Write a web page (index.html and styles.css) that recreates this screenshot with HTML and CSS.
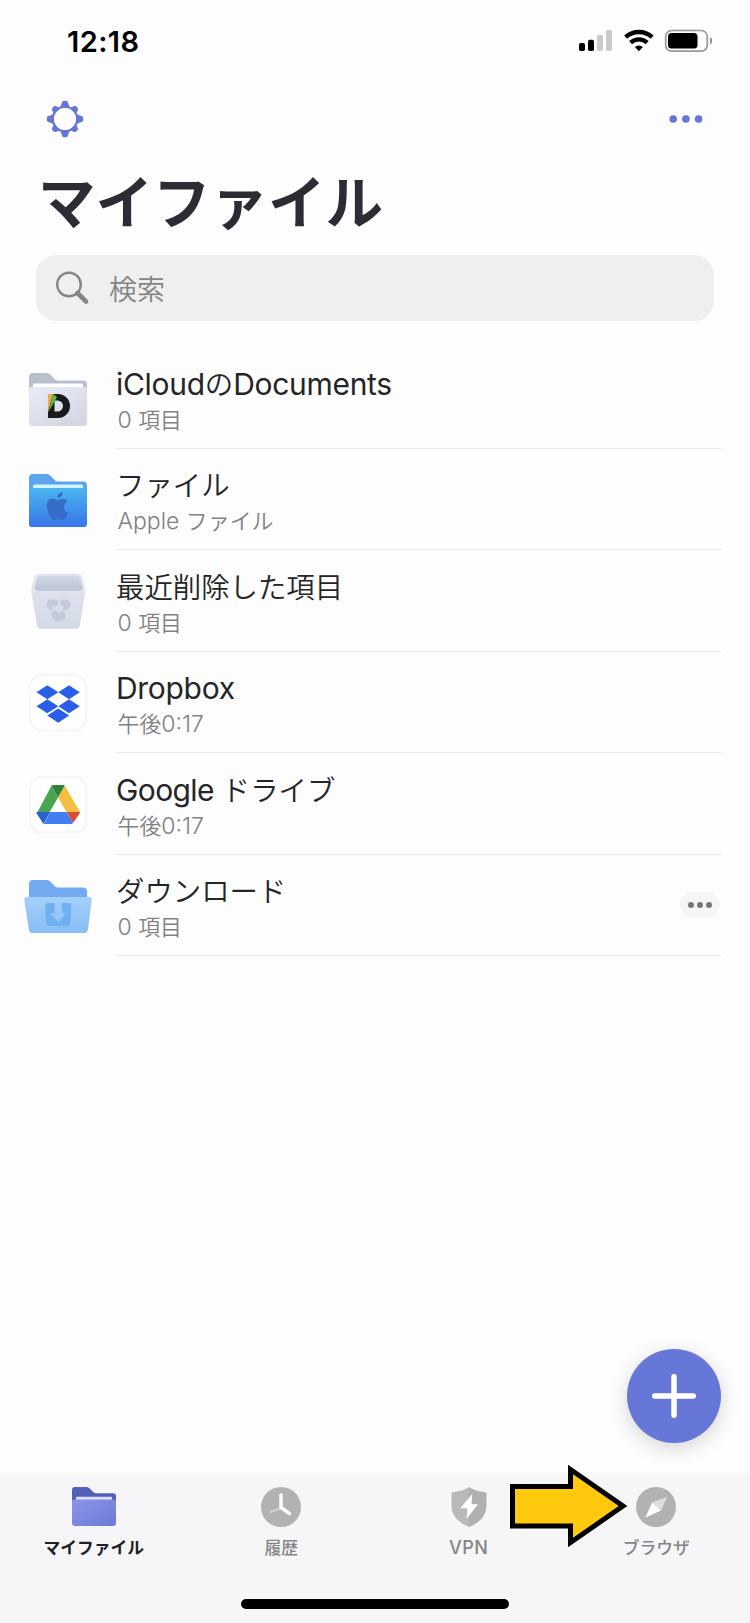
FILE: index.html
```html
<!DOCTYPE html>
<html lang="ja">
<head>
<meta charset="utf-8">
<title>マイファイル</title>
<link rel="stylesheet" href="styles.css">
</head>
<body>
<div class="screen">
  <header class="status">
    <span class="time">12:18</span>
    <svg class="status-icons" viewBox="0 0 136 26" width="136" height="26">
      <rect x="1" y="15" width="6" height="8" rx="1.8"/>
      <rect x="10" y="11.800" width="6" height="11.200" rx="1.800"/>
      <g fill="#cbcbcb"><rect x="19" y="7" width="6" height="16" rx="1.800"/><rect x="28" y="2" width="6" height="21" rx="1.800"/></g>
      <g fill="none" stroke="#000" stroke-width="4.300"><path d="M47.600 9.200a19.600 19.600 0 0 1 26.600 0"/><path d="M52.600 14.700a12.200 12.200 0 0 1 16.600 0"/></g>
      <path d="M56.900 19a5.800 5.800 0 0 1 8 0l-4 4.300z"/>
      <rect x="87.700" y="2.500" width="41.600" height="20.600" rx="6" fill="none" stroke="#999" stroke-width="1.700"/>
      <rect x="90" y="5" width="29.500" height="15.500" rx="3.500"/>
      <path d="M132.200 9c2.500 1 2.500 6.500 0 7.500z" fill="#888"/>
    </svg>
  </header>

  <nav class="toolbar">
    <svg viewBox="-19 -19 38 38" width="38" height="38" fill="#6576d6">
      <defs><path id="tooth" d="M-5-12C-3.300-13.500-3.300-18.200-1.200-18.200H1.200C3.300-18.200 3.300-13.500 5-12z"/></defs>
      <circle r="12" fill="none" stroke="#6576d6" stroke-width="2.200"/>
      <use href="#tooth"/><use href="#tooth" transform="rotate(45) translate(0 1.500)"/><use href="#tooth" transform="rotate(90)"/><use href="#tooth" transform="rotate(135) translate(0 1.500)"/><use href="#tooth" transform="rotate(180)"/><use href="#tooth" transform="rotate(225) translate(0 1.500)"/><use href="#tooth" transform="rotate(270)"/><use href="#tooth" transform="rotate(315) translate(0 1.500)"/>
      <circle r="11" fill="#fdfdfd"/>
    </svg>
    <svg viewBox="0 0 34 10" width="34" height="10" fill="#6576d6"><circle cx="4.200" cy="5" r="3.800"/><circle cx="16.900" cy="5" r="3.800"/><circle cx="29.600" cy="5" r="3.800"/></svg>
  </nav>

  <h1 class="heading">マイファイル</h1>

  <div class="search">
    <svg viewBox="0 0 36 36" width="36" height="36" fill="none" stroke="#858585"><circle cx="14" cy="14.500" r="11.800" stroke-width="2.400"/><path d="M22.500 23l8.500 8.500" stroke-width="4.600" stroke-linecap="round"/></svg>
    <span>検索</span>
  </div>

  <main class="list">
    <div class="row">
      <svg class="icon" viewBox="0 0 70 70">
        <defs><linearGradient id="gray" x2=".6" y2="1"><stop stop-color="#e9ebf5"/><stop offset="1" stop-color="#d5d8e4"/></linearGradient></defs>
        <path d="M6 47V12q0-4 4-4h14q2 0 3.500 1.800L32 14.500q1 1 3 1h25q4 0 4 4V50H6z" fill="#b9bfcc"/>
        <rect x="10" y="18.500" width="50" height="12" rx="1.500" fill="#fff"/>
        <path d="M6 24q0-2 2-2h54q2 0 2 2v34q0 3-3 3H9q-3 0-3-3z" fill="url(#gray)"/>
        <path fill-rule="evenodd" d="M27 29h8a12 12 0 0 1 0 24H25V42zm4.500 6.500v11h3a5.500 5.500 0 0 0 0-11z" fill="#181a1c"/>
        <path d="M25 29h5l-5 18z" fill="#f3a64c"/><path d="M30 29l4 3-8.500 15z" fill="#59b947"/>
      </svg>
      <div class="info"><div class="name n1">iCloud<b>の</b>Documents</div><div class="sub">0 <b>項目</b></div></div>
    </div>
    <div class="row">
      <svg class="icon" viewBox="0 0 70 70">
        <defs><linearGradient id="blue" x2="0" y2="1"><stop stop-color="#4bb5ef"/><stop offset="1" stop-color="#3875e8"/></linearGradient></defs>
        <path d="M6 47V12q0-4 4-4h14q2 0 3.500 1.800L32 14.500q1 1 3 1h25q4 0 4 4V50H6z" fill="#5aa5ec"/>
        <rect x="10" y="18.500" width="50" height="12" rx="1.500" fill="#d4f2ff"/>
        <path d="M6 24q0-2 2-2h54q2 0 2 2v34q0 3-3 3H9q-3 0-3-3z" fill="url(#blue)"/>
        <path transform="translate(0 1)" d="M34.500 33q-3-1.500-5-1.500c-4 0-6 3.500-5.500 8.500.6 6 4 13 7.500 13 1.500 0 2.200-1 4-1s2.500 1 4 1c2.500 0 4.700-4 5.500-7-5.500-2.500-5-9.500-.5-11.500-2-3-5-3.200-7-2.300q-2 .8-3 .8zM34.200 31c0-3.200 2.500-5.500 5.500-6 .3 3-2.200 6-5.500 6z" fill="#356dcb"/>
      </svg>
      <div class="info"><div class="name"><b>ファイル</b></div><div class="sub">Apple <b>ファイル</b></div></div>
    </div>
    <div class="row">
      <svg class="icon" viewBox="0 0 70 70">
        <defs><linearGradient id="bin" x2="0" y2="1"><stop stop-color="#e2e6f0"/><stop offset="1" stop-color="#d3d9e6"/></linearGradient><linearGradient id="rim" x2="0" y2="1"><stop stop-color="#d2d8e4"/><stop offset="1" stop-color="#bac2d3"/></linearGradient></defs>
        <path d="M16 5.800h39q3 0 4 3l3 12q.3 2 0 4l-5 32q-.5 4-4 4H18q-3.500 0-4-4L8.500 25q-.5-3 0-5l3.200-11.200q1-3 4.300-3z" fill="url(#bin)"/>
        <path d="M18 7.800h34q4 0 5 3l2.500 8q.5 4-4 4h-40q-4.500 0-3.500-4l2.500-8q.7-3 3.500-3z" fill="url(#rim)"/>
        <g fill="#c3cada"><path d="M25.500 31.500h8l2 3.500-2.500 4-3-1-1.500 4-3-1-2.500-4z"/><path d="M37.500 31.500h7.500l3 5-3.500 5.500h-5.500l2-3-4-3z"/><path d="M29 43.500l2.500-1.500 4 3.500 4-2.500 2 1.500 1.500 2.500-4 6h-7l-4-6z"/></g>
      </svg>
      <div class="info"><div class="name"><b>最近削除した項目</b></div><div class="sub">0 <b>項目</b></div></div>
    </div>
    <div class="row">
      <svg class="icon" viewBox="0 0 70 70">
        <rect x="7" y="6" width="56" height="55.500" rx="12" fill="#fff" stroke="#f7f7fa" stroke-width="2.500"/>
        <path fill="#295fe8" d="M24.300 16.300l11 7-11 7-10.800-7zM46 16.300l10.800 7-10.800 7-10.700-7zM24.300 30.300l11 7-11 7-10.800-7zM46 30.300l10.800 7-10.800 7-10.700-7zM35.200 39.500l11 7-11 7.300-11-7.300z"/>
      </svg>
      <div class="info"><div class="name n4">Dropbox</div><div class="sub"><b>午後</b>0:17</div></div>
    </div>
    <div class="row">
      <svg class="icon" viewBox="0 0 70 70">
        <rect x="7" y="6" width="56" height="55.500" rx="12" fill="#fff" stroke="#f7f7fa" stroke-width="2.500"/>
        <path d="M28.500 14.800L35 26.500 21.200 50.500 14 42z" fill="#49a551"/><path d="M28.500 14.800q1-.8 2-.8h9.400q1.100 0 2 .8L35 26.500z" fill="#31833b"/>
        <path d="M41.900 14.800L57 41H43.500L35 26.500z" fill="#f3be42"/><path d="M43.500 41h13.300q.2 1-.5 2L50 52z" fill="#dc4b36"/><path d="M27 41h16.500L50 52q-.5 1-2 1H21z" fill="#417ef1"/><path d="M13.500 41H27l-6.500 12L14 43q-.7-1-.5-2z" fill="#2862cb"/>
      </svg>
      <div class="info"><div class="name n5">Google <b>ドライブ</b></div><div class="sub"><b>午後</b>0:17</div></div>
    </div>
    <div class="row">
      <svg class="icon" viewBox="0 0 70 70">
        <defs><linearGradient id="sky" x2="0" y2="1"><stop stop-color="#a5cffb"/><stop offset="1" stop-color="#87bdf3"/></linearGradient></defs>
        <path d="M6 47V12q0-4 4-4h14q2 0 3.500 1.800L32 14.500q1 1 3 1h25q4 0 4 4V50H6z" fill="#74abf0"/>
        <path d="M4 25h62q3 0 2.700 3L65 57q-.5 4-3.500 4H9q-2.700 0-3.200-4L1.300 28Q1 25 4 25z" fill="url(#sky)"/>
        <path d="M25 31h6.500v10H27l8.300 9.500L43 41h-4V31h6.500q3 0 2.800 3l-1 17q-.3 3-3 3H26q-2.800 0-3-3l-1-17q-.2-3 3-3z" fill="#6fb0f0"/>
      </svg>
      <div class="info"><div class="name"><b>ダウンロード</b></div><div class="sub">0 <b>項目</b></div></div>
      <span class="more"><i></i><i></i><i></i></span>
    </div>
  </main>

  <nav class="tabs">
    <div class="tab active">
      <svg viewBox="0 0 44 40" width="44" height="40">
        <defs><linearGradient id="vio" x2="1" y2="1"><stop stop-color="#8c94e8"/><stop offset="1" stop-color="#6d7ad4"/></linearGradient></defs>
        <path d="M0 30V3q0-3 3-3h11q2 0 3.500 1.300l4 4q1 .9 3 .9H41q3 0 3 3V30z" fill="#5260b8"/>
        <rect x="4" y="9.800" width="36" height="9" rx="1" fill="#dce0ff"/>
        <path d="M0 14.500q0-2 2-2h40q2 0 2 2V36q0 3-3 3H3q-3 0-3-3z" fill="url(#vio)"/>
      </svg>
      <span>マイファイル</span>
    </div>
    <div class="tab">
      <svg viewBox="0 0 40 40" width="40" height="40" fill="none" stroke-linecap="round"><circle cx="20" cy="20" r="20" fill="#b2b2b2"/><path d="M20 21l-10.500 4" stroke="#d2d2d2" stroke-width="2"/><path d="M20 8v12.500l8.500 6" stroke="#fff" stroke-width="3.400" stroke-linejoin="round"/></svg>
      <span>履歴</span>
    </div>
    <div class="tab">
      <svg viewBox="0 0 40 40" width="40" height="40"><path d="M20 0q-7 4.600-15.500 5-2 .2-2 2v12Q3 33 20 40z" fill="#b9b9b9"/><path d="M20 0q7 4.600 15.500 5 2 .2 2 2v12Q37 33 20 40z" fill="#b0b0b0"/><path d="M23.300 7L11.200 21.200h7.300L17.500 32 29 17.200h-6.500z" fill="#fff"/></svg>
      <span class="latin">VPN</span>
    </div>
    <div class="tab">
      <svg viewBox="0 0 40 40" width="40" height="40"><circle cx="20" cy="20" r="20" fill="#b2b2b2"/><path d="M31 10L16 15.500 25 23.500z" fill="#dedede"/><path d="M16 15.500L9.500 30.500 25 23.500z" fill="#fff"/></svg>
      <span>ブラウザ</span>
    </div>
    <div class="home"></div>
  </nav>

  <div class="fab"><svg viewBox="0 0 44 44" width="44" height="44" stroke="#fff" stroke-width="5.500" stroke-linecap="round"><path d="M22 2.700v38.600M2.700 22h38.600"/></svg></div>
  <svg class="arrow" viewBox="0 0 120 84" width="120" height="84"><path d="M4.500 23.500H62.500V6.500L115 43 62.500 79.500V63H4.500z" fill="#ffc90e" stroke="#000" stroke-width="5"/></svg>
</div>
</body>
</html>
```

FILE: styles.css
```css
* { box-sizing: border-box; }
body { margin: 0; background: #fdfdfd; font-family: Inter, "Noto Sans CJK JP", sans-serif; }
svg { display: block; flex: none; }
.screen { position: relative; display: flex; flex-direction: column; width: 750px; height: 1623px; overflow: hidden; }
.status { display: flex; justify-content: space-between; align-items: flex-start; height: 90px; padding: 28px 36px 0 67px; }
.time { font-size: 29px; font-weight: 600; line-height: 27px; letter-spacing: .4px; color: #000; }
.toolbar { display: flex; justify-content: space-between; align-items: center; height: 58px; padding: 0 47px 0 46px; }
.heading { margin: 0; padding: 15px 0 0 38px; height: 107px; font-family: "Noto Sans CJK JP", sans-serif; font-size: 57.500px; line-height: 72px; font-weight: 700; color: #2d2c35; }
.search { display: flex; align-items: center; gap: 18px; height: 66px; margin: 0 36px; padding-left: 19px; border-radius: 20px; background: #efefef; font: 350 28px/40px "Noto Sans CJK JP", sans-serif; color: #858585; }
.list { display: flex; flex-direction: column; padding-top: 26.400px; flex: 1; }
.row { display: flex; align-items: flex-start; height: 101.500px; padding-right: 29px; position: relative; }
.icon { width: 70px; height: 70px; margin: 17.500px 23px 0; }
.info { flex: 1; height: 101.500px; padding-top: 18.500px; border-bottom: 1px solid #e9e9eb; white-space: pre; }
.name { font-size: 30px; line-height: 36px; color: #252528; padding-left: 0; }
.name b { font-size: 28.400px; font-weight: 350; line-height: 1; letter-spacing: 0; }
.sub { margin-top: 3px; padding-left: 1.500px; font-size: 23px; line-height: 30px; font-weight: 350; color: #818184; }
.sub b { font-size: 21.900px; font-weight: 350; line-height: 1; }
.n1, .n4, .n5 { letter-spacing: -.3px; font-weight: 370; }
.n5 { letter-spacing: -.6px; }
.more { position: absolute; right: 30px; top: 37px; display: flex; align-items: center; justify-content: center; gap: 3px; width: 40px; height: 26px; border-radius: 13px; background: #f6f6f6; }
.more i { width: 6px; height: 6px; border-radius: 50%; background: #777; }
.tabs { display: grid; grid-template-columns: repeat(4, 1fr); grid-template-rows: 126px 10px; height: 150px; background: #f6f6f8; }
.tab { display: flex; flex-direction: column; align-items: center; padding-top: 14px; gap: 8px; font: 500 16.800px/24px "Noto Sans CJK JP", sans-serif; color: #858585; }
.tab.active { color: #202024; font-weight: 700; }
.tab .latin { font: 500 18px/26px Inter, sans-serif; letter-spacing: .5px; }
.home { grid-column: 1 / -1; justify-self: center; width: 268px; height: 9.500px; border-radius: 5px; background: #000; }
.fab { position: absolute; left: 627px; top: 1349px; width: 94px; height: 94px; border-radius: 50%; display: flex; align-items: center; justify-content: center; background: #6777d8; box-shadow: 0 5px 20px rgba(0,0,0,.16); }
.arrow { position: absolute; left: 508px; top: 1463px; }
```
